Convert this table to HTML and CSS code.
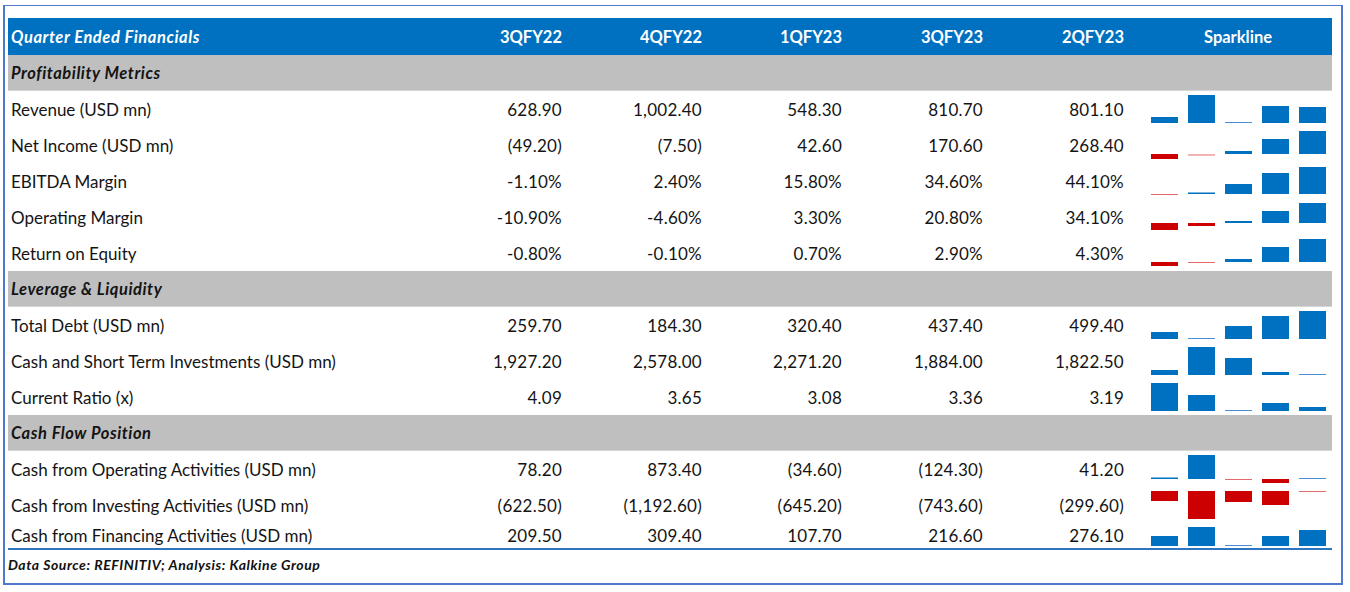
FILE: index.html
```html
<!DOCTYPE html>
<html lang="en">
<head>
<meta charset="utf-8">
<title>Quarter Ended Financials</title>
<link rel="stylesheet" href="styles.css">
</head>
<body>
<div class="frame">
  <div class="table">
    <div class="row head">
      <div class="label">Quarter Ended Financials</div>
      <div class="num">3QFY22</div>
      <div class="num">4QFY22</div>
      <div class="num">1QFY23</div>
      <div class="num">3QFY23</div>
      <div class="num">2QFY23</div>
      <div class="spark-head">Sparkline</div>
    </div>

    <div class="row section"><div class="label">Profitability Metrics</div></div>

    <div class="row">
      <div class="label">Revenue (USD mn)</div>
      <div class="num">628.90</div><div class="num">1,002.40</div><div class="num">548.30</div><div class="num">810.70</div><div class="num">801.10</div>
      <svg class="spark" width="204" height="36" viewBox="0 0 204 36">
        <rect class="b" x="23" y="26" width="27" height="6"/>
        <rect class="b" x="60" y="4" width="27" height="28"/>
        <rect class="bt" x="97" y="31" width="27" height="1"/>
        <rect class="b" x="134" y="15" width="27" height="17"/>
        <rect class="b" x="171" y="16" width="27" height="16"/>
      </svg>
    </div>
    <div class="row">
      <div class="label">Net Income (USD mn)</div>
      <div class="num">(49.20)</div><div class="num">(7.50)</div><div class="num">42.60</div><div class="num">170.60</div><div class="num">268.40</div>
      <svg class="spark" width="204" height="36" viewBox="0 0 204 36">
        <rect class="r" x="23" y="27" width="27" height="5"/>
        <rect class="rt" x="60" y="27.5" width="27" height="1"/>
        <rect class="b" x="97" y="24" width="27" height="3"/>
        <rect class="b" x="134" y="12" width="27" height="15"/>
        <rect class="b" x="171" y="4" width="27" height="23"/>
      </svg>
    </div>
    <div class="row">
      <div class="label">EBITDA Margin</div>
      <div class="num">-1.10%</div><div class="num">2.40%</div><div class="num">15.80%</div><div class="num">34.60%</div><div class="num">44.10%</div>
      <svg class="spark" width="204" height="36" viewBox="0 0 204 36">
        <rect class="rt" x="23" y="31" width="27" height="1"/>
        <rect class="b" x="60" y="29.5" width="27" height="1.5"/>
        <rect class="b" x="97" y="21" width="27" height="10"/>
        <rect class="b" x="134" y="10" width="27" height="21"/>
        <rect class="b" x="171" y="4" width="27" height="27"/>
      </svg>
    </div>
    <div class="row">
      <div class="label">Operating Margin</div>
      <div class="num">-10.90%</div><div class="num">-4.60%</div><div class="num">3.30%</div><div class="num">20.80%</div><div class="num">34.10%</div>
      <svg class="spark" width="204" height="36" viewBox="0 0 204 36">
        <rect class="r" x="23" y="24" width="27" height="7"/>
        <rect class="r" x="60" y="24" width="27" height="3"/>
        <rect class="b" x="97" y="22" width="27" height="2"/>
        <rect class="b" x="134" y="12" width="27" height="12"/>
        <rect class="b" x="171" y="4" width="27" height="20"/>
      </svg>
    </div>
    <div class="row">
      <div class="label">Return on Equity</div>
      <div class="num">-0.80%</div><div class="num">-0.10%</div><div class="num">0.70%</div><div class="num">2.90%</div><div class="num">4.30%</div>
      <svg class="spark" width="204" height="36" viewBox="0 0 204 36">
        <rect class="r" x="23" y="27" width="27" height="4"/>
        <rect class="rt" x="60" y="27" width="27" height="1"/>
        <rect class="b" x="97" y="24" width="27" height="3"/>
        <rect class="b" x="134" y="12" width="27" height="15"/>
        <rect class="b" x="171" y="4" width="27" height="23"/>
      </svg>
    </div>

    <div class="row section"><div class="label">Leverage &amp; Liquidity</div></div>

    <div class="row">
      <div class="label">Total Debt (USD mn)</div>
      <div class="num">259.70</div><div class="num">184.30</div><div class="num">320.40</div><div class="num">437.40</div><div class="num">499.40</div>
      <svg class="spark" width="204" height="36" viewBox="0 0 204 36">
        <rect class="b" x="23" y="25" width="27" height="7"/>
        <rect class="bt" x="60" y="31" width="27" height="1"/>
        <rect class="b" x="97" y="19" width="27" height="13"/>
        <rect class="b" x="134" y="9" width="27" height="23"/>
        <rect class="b" x="171" y="4" width="27" height="28"/>
      </svg>
    </div>
    <div class="row">
      <div class="label">Cash and Short Term Investments (USD mn)</div>
      <div class="num">1,927.20</div><div class="num">2,578.00</div><div class="num">2,271.20</div><div class="num">1,884.00</div><div class="num">1,822.50</div>
      <svg class="spark" width="204" height="36" viewBox="0 0 204 36">
        <rect class="b" x="23" y="27" width="27" height="5"/>
        <rect class="b" x="60" y="4" width="27" height="28"/>
        <rect class="b" x="97" y="15" width="27" height="17"/>
        <rect class="b" x="134" y="29" width="27" height="3"/>
        <rect class="bt" x="171" y="31" width="27" height="1"/>
      </svg>
    </div>
    <div class="row">
      <div class="label">Current Ratio (x)</div>
      <div class="num">4.09</div><div class="num">3.65</div><div class="num">3.08</div><div class="num">3.36</div><div class="num">3.19</div>
      <svg class="spark" width="204" height="36" viewBox="0 0 204 36">
        <rect class="b" x="23" y="4" width="27" height="28"/>
        <rect class="b" x="60" y="16" width="27" height="16"/>
        <rect class="bt" x="97" y="31" width="27" height="1"/>
        <rect class="b" x="134" y="24" width="27" height="8"/>
        <rect class="b" x="171" y="28" width="27" height="4"/>
      </svg>
    </div>

    <div class="row section"><div class="label">Cash Flow Position</div></div>

    <div class="row">
      <div class="label">Cash from Operating Activities (USD mn)</div>
      <div class="num">78.20</div><div class="num">873.40</div><div class="num">(34.60)</div><div class="num">(124.30)</div><div class="num">41.20</div>
      <svg class="spark" width="204" height="36" viewBox="0 0 204 36">
        <rect class="b" x="23" y="26.5" width="27" height="1.5"/>
        <rect class="b" x="60" y="4" width="27" height="24"/>
        <rect class="rt" x="97" y="28" width="27" height="1"/>
        <rect class="r" x="134" y="28" width="27" height="4"/>
        <rect class="bt" x="171" y="27" width="27" height="1"/>
      </svg>
    </div>
    <div class="row">
      <div class="label">Cash from Investing Activities (USD mn)</div>
      <div class="num">(622.50)</div><div class="num">(1,192.60)</div><div class="num">(645.20)</div><div class="num">(743.60)</div><div class="num">(299.60)</div>
      <svg class="spark" width="204" height="36" viewBox="0 0 204 36">
        <rect class="r" x="23" y="4" width="27" height="10"/>
        <rect class="r" x="60" y="4" width="27" height="28"/>
        <rect class="r" x="97" y="4" width="27" height="11"/>
        <rect class="r" x="134" y="4" width="27" height="14"/>
        <rect class="rt" x="171" y="4" width="27" height="1"/>
      </svg>
    </div>
    <div class="row last">
      <div class="label">Cash from Financing Activities (USD mn)</div>
      <div class="num">209.50</div><div class="num">309.40</div><div class="num">107.70</div><div class="num">216.60</div><div class="num">276.10</div>
      <svg class="spark" width="204" height="25" viewBox="0 0 204 25">
        <rect class="b" x="23" y="13" width="27" height="10"/>
        <rect class="b" x="60" y="4" width="27" height="19"/>
        <rect class="bt" x="97" y="22" width="27" height="1"/>
        <rect class="b" x="134" y="13" width="27" height="10"/>
        <rect class="b" x="171" y="7" width="27" height="16"/>
      </svg>
    </div>
  </div>
  <div class="source">Data Source: REFINITIV; Analysis: Kalkine Group</div>
</div>
</body>
</html>
```

FILE: styles.css
```css
html, body {
  margin: 0;
  padding: 0;
  background: #ffffff;
}

body {
  font-family: Lato, "Open Sans", "Liberation Sans", sans-serif;
  color: #141414;
}

.frame {
  box-sizing: border-box;
  margin: 5px 0 0 3px;
  width: 1340px;
  height: 580px;
  border: 2px solid #4f79cc;
  border-top-width: 1px;
  padding: 12px 0 0 3px;
}

.table {
  width: 1324px;
  display: flex;
  flex-direction: column;
}

.row {
  display: grid;
  grid-template-columns: 418px 140px 140px 140px 141px 141px 204px;
  height: 36px;
  align-items: center;
  font-size: 17px;
}

.row .label {
  padding-left: 3px;
  white-space: nowrap;
}

.row .num {
  text-align: right;
  padding-right: 4px;
  letter-spacing: 0.25px;
}

.spark {
  display: block;
  align-self: start;
}

.b { fill: #0070c0; }
.bt { fill: #4a8fd3; }
.r { fill: #cc0000; }
.rt { fill: #e26a6a; }

.head {
  height: 37px;
  background: #0070c0;
  color: #ffffff;
  font-weight: 700;
  font-size: 16.5px;
}

.head .num {
  letter-spacing: 0;
}

.head .label {
  font-style: italic;
  letter-spacing: 0.55px;
}

.spark-head {
  text-align: center;
  padding-left: 16px;
}

.section {
  background: #bfbfbf;
  border-bottom: 1px solid #d6d6d6;
  box-sizing: border-box;
  font-weight: 700;
  font-style: italic;
  font-size: 16.5px;
  letter-spacing: 0.55px;
  grid-template-columns: 1fr;
}

.last {
  height: 25px;
  border-bottom: 2px solid #2e75c0;
}

.source {
  font-size: 14px;
  font-weight: 700;
  font-style: italic;
  letter-spacing: 0.55px;
  padding: 6px 0 0 0;
  color: #111111;
}
```
